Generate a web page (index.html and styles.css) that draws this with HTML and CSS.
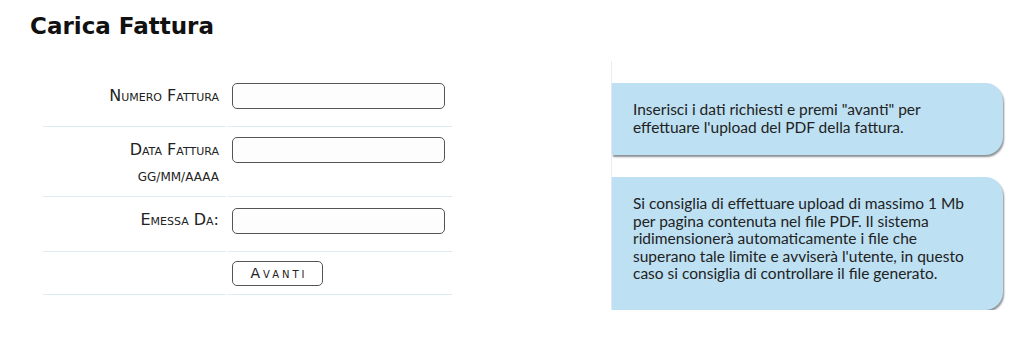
FILE: index.html
```html
<!DOCTYPE html>
<html lang="it">

<head>
    <meta charset="UTF-8">
    <title>Carica Fattura</title>
    <link rel="stylesheet" href="styles.css">
</head>

<body>
    <h1 class="page-title">Carica Fattura</h1>

    <div class="content">
        <form class="upload-form">
            <table class="form-table">
                <tr>
                    <td class="label-cell">Numero Fattura</td>
                    <td class="field-cell"><input type="text" class="text-input"></td>
                </tr>
                <tr class="row-date">
                    <td class="label-cell">
                        Data Fattura
                        <div class="hint">gg/mm/aaaa</div>
                    </td>
                    <td class="field-cell"><input type="text" class="text-input"></td>
                </tr>
                <tr class="row-issuer">
                    <td class="label-cell">Emessa Da:</td>
                    <td class="field-cell"><input type="text" class="text-input"></td>
                </tr>
                <tr class="row-submit">
                    <td class="label-cell"></td>
                    <td class="field-cell"><button type="button" class="btn-next">Avanti</button></td>
                </tr>
            </table>
        </form>

        <div class="info-column">
            <div class="info-box">
                Inserisci i dati richiesti e premi "avanti" per<br>
                effettuare l'upload del PDF della fattura.
            </div>
            <div class="info-box info-box-long">
                Si consiglia di effettuare upload di massimo 1 Mb<br>
                per pagina contenuta nel file PDF. Il sistema<br>
                ridimensionerà automaticamente i file che<br>
                superano tale limite e avviserà l'utente, in questo<br>
                caso si consiglia di controllare il file generato.
            </div>
        </div>
    </div>
</body>

</html>
```

FILE: styles.css
```css
body {
    margin: 0;
    padding: 0;
    background: #fff;
    font-family: "DejaVu Sans", Verdana, sans-serif;
    color: #111;
}

.page-title {
    margin: 0;
    padding: 13px 0 0 30px;
    font-size: 23px;
    font-weight: bold;
    height: 48px;
    box-sizing: border-box;
}

.content {
    display: flex;
    align-items: flex-start;
    padding-top: 13px;
}

/* form on the left */
.upload-form {
    margin-left: 43px;
    width: 409px;
    padding-top: 4px;
}

.form-table {
    width: calc(100% + 4px);
    border-collapse: separate;
    border-spacing: 2px 0;
    margin-left: -2px;
}

.form-table td {
    border-bottom: 1px solid #dcecf4;
    padding: 0;
    height: 61px;
    vertical-align: middle;
}

.form-table .label-cell {
    width: 176px;
    text-align: right;
    padding-right: 7px;
    font-size: 16px;
    font-variant: small-caps;
    color: #222;
}

.form-table .field-cell {
    padding-left: 4px;
}

.form-table .row-date td {
    height: 56px;
}

.form-table .row-date .label-cell {
    vertical-align: top;
    padding-top: 13px;
}

.form-table .row-date .field-cell {
    vertical-align: top;
    padding-top: 10px;
}

.hint {
    font-size: 12px;
    margin-top: 11px;
    font-variant: normal;
    text-transform: uppercase;
}

.form-table .row-issuer td {
    height: 43px;
    vertical-align: top;
    padding-top: 11px;
}

.form-table .row-issuer .label-cell {
    padding-top: 13px;
    height: 41px;
}

.form-table .row-submit td {
    height: 42px;
}

.text-input {
    display: block;
    width: 213px;
    height: 26px;
    box-sizing: border-box;
    border: 1px solid #555;
    border-radius: 5px;
    background: #fdfdfd;
}

.btn-next {
    display: block;
    width: 91px;
    height: 25px;
    border: 1px solid #555;
    border-radius: 5px;
    background: #fff;
    font-family: "DejaVu Sans", Verdana, sans-serif;
    font-size: 14px;
    font-variant: small-caps;
    letter-spacing: 3px;
    color: #222;
    padding: 0 0 0 3px;
}

/* info boxes on the right */
.info-column {
    margin-left: 159px;
    border-left: 1px solid #e4eef3;
    padding: 22px 0 0 0;
    display: flex;
    flex-direction: column;
    gap: 22px;
}

.info-box {
    width: 370px;
    padding: 18px 0 19px 21px;
    background: #bde0f3;
    border-radius: 0 18px 18px 0;
    box-shadow: 1px 2px 2px #8a8f93;
    font-family: Lato, "Open Sans", sans-serif;
    font-size: 15.5px;
    line-height: 17.5px;
    color: #222;
}

.info-box-long {
    padding-bottom: 27px;
}
```
